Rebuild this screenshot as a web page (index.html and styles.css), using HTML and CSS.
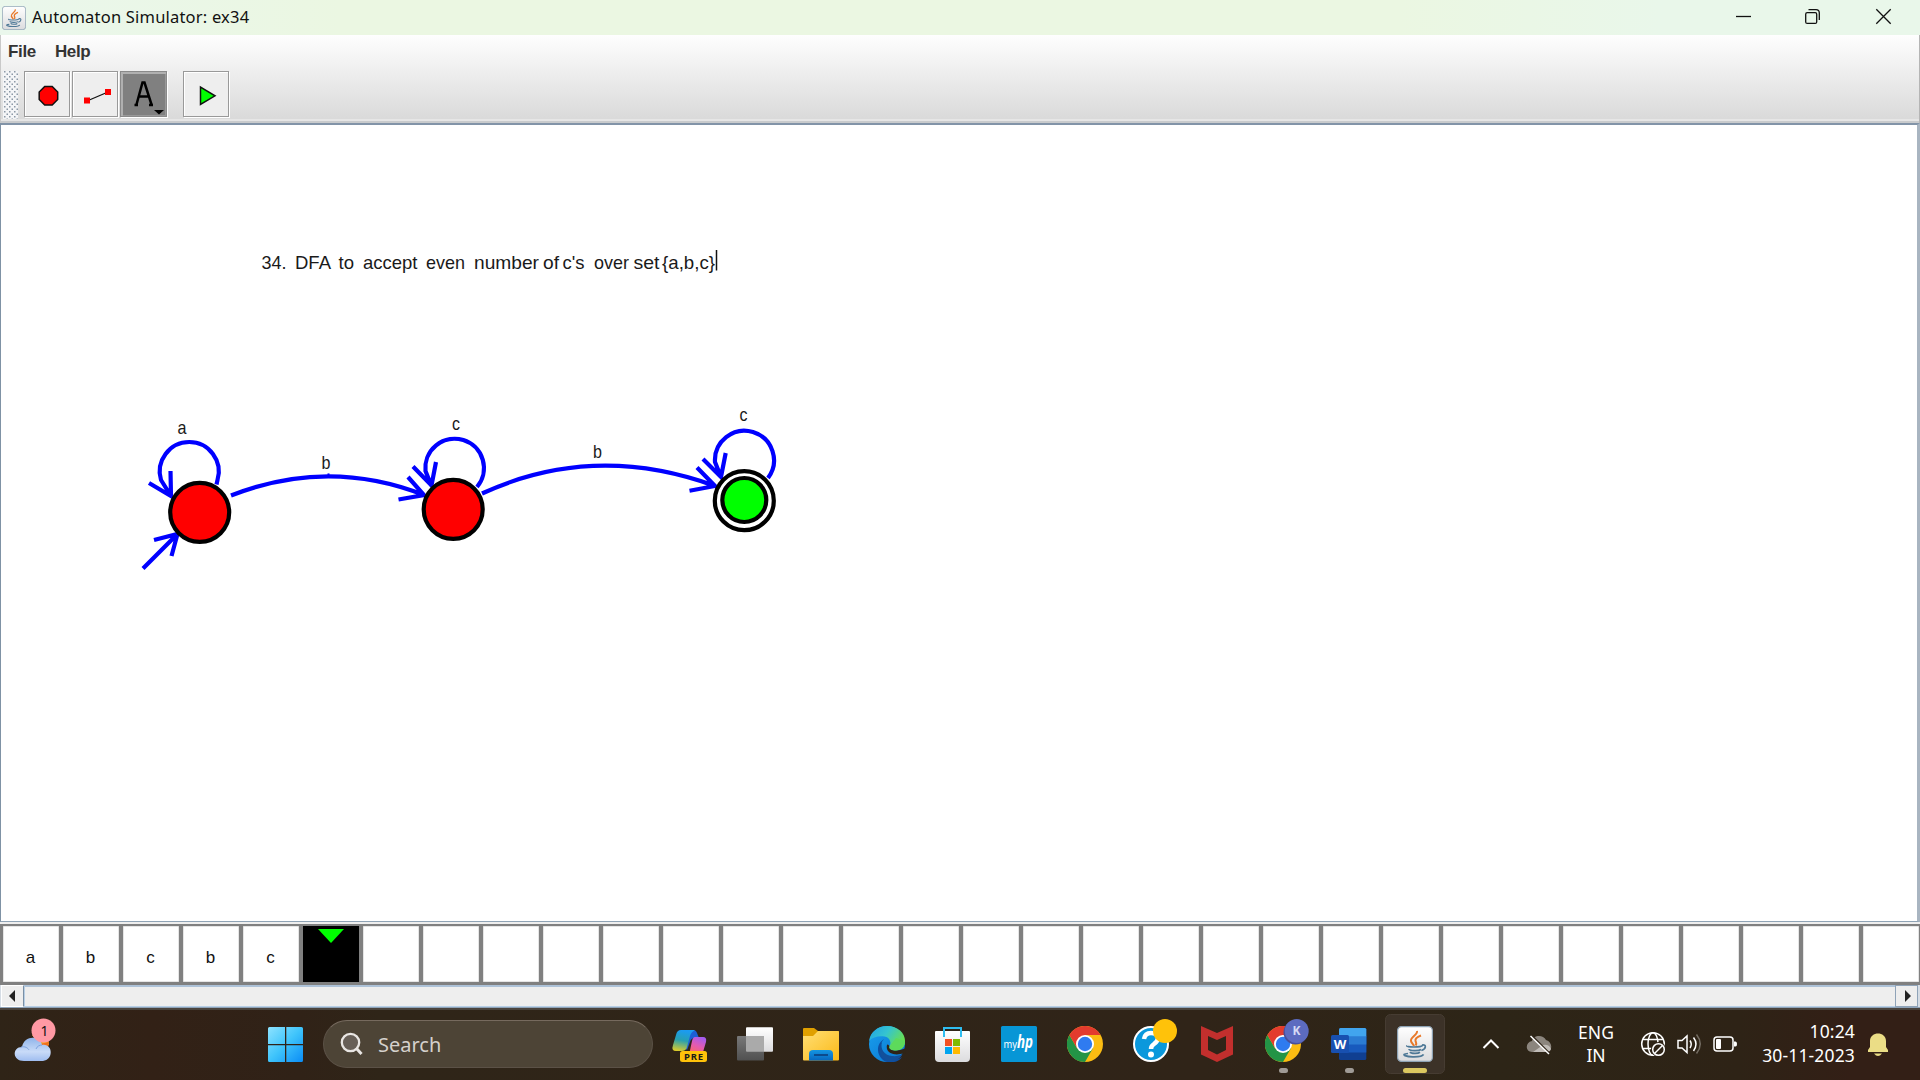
FILE: index.html
```html
<!DOCTYPE html>
<html lang="en">
<head>
<meta charset="utf-8">
<title>Automaton Simulator: ex34</title>
<link rel="stylesheet" href="styles.css">
</head>
<body>
<svg class="defs" width="0" height="0" aria-hidden="true">
  <defs>
    <linearGradient id="gWin" x1="0" y1="0" x2="1" y2="1"><stop offset="0" stop-color="#8ee3ff"/><stop offset=".5" stop-color="#3fc4fb"/><stop offset="1" stop-color="#0a8cf5"/></linearGradient>
    <linearGradient id="gCloud" x1="0" y1="0" x2="0" y2="1"><stop offset="0" stop-color="#8fb4ea"/><stop offset=".6" stop-color="#c9dbf8"/><stop offset="1" stop-color="#9fbdf0"/></linearGradient>
    <linearGradient id="gCo1" x1="0.3" y1="0" x2="0.1" y2="1"><stop offset="0" stop-color="#1b9bf0"/><stop offset=".45" stop-color="#27a0b0"/><stop offset="1" stop-color="#e8cf22"/></linearGradient>
    <linearGradient id="gCo2" x1="0.7" y1="0" x2="0.3" y2="1"><stop offset="0" stop-color="#a35cf0"/><stop offset=".5" stop-color="#e45bb0"/><stop offset="1" stop-color="#ff6a5a"/></linearGradient>
    <linearGradient id="gFold" x1="0" y1="0" x2="1" y2="1"><stop offset="0" stop-color="#ffdf75"/><stop offset="1" stop-color="#fbb917"/></linearGradient>
    <linearGradient id="gBlue" x1="0" y1="0" x2="0" y2="1"><stop offset="0" stop-color="#1496e2"/><stop offset="1" stop-color="#0767bf"/></linearGradient>
    <linearGradient id="gEdge" x1="0" y1="0" x2="1" y2=".5"><stop offset="0" stop-color="#1fa0e6"/><stop offset=".5" stop-color="#35c4d0"/><stop offset="1" stop-color="#6ae04c"/></linearGradient>
    <linearGradient id="gEdge2" x1="0" y1="0" x2="1" y2="1"><stop offset="0" stop-color="#1aa0ee"/><stop offset="1" stop-color="#0873cf"/></linearGradient>
    <linearGradient id="gPaper" x1="0" y1="0" x2="0" y2="1"><stop offset="0" stop-color="#ffffff"/><stop offset="1" stop-color="#dcdcde"/></linearGradient>
    <linearGradient id="gGray" x1="0" y1="0" x2="0" y2="1"><stop offset="0" stop-color="#787878"/><stop offset="1" stop-color="#505050"/></linearGradient>
    <symbol id="chrome" viewBox="0 0 36 36">
      <circle cx="18" cy="18" r="18" fill="#fbbc12"/>
      <path d="M18 18 10.2 22.5 2.4 9A18 18 0 0 0 18 36L25.8 22.5Z" fill="#239446"/>
      <path d="M18 9H33.6A18 18 0 0 0 2.4 9L10.2 22.5 18 18Z" fill="#e33b2e"/>
      <circle cx="18" cy="18" r="9" fill="#fff"/><circle cx="18" cy="18" r="7.2" fill="#2f7bf0"/>
    </symbol>
    <symbol id="java" viewBox="0 0 36 36">
      <rect x=".6" y=".6" width="34.8" height="34.8" rx="4" fill="url(#gPaper)" stroke="#8ea3b5" stroke-width="1.2"/>
      <path d="M20 5C21 9 13 11 14 15c.4 2 2.400 3 3 5M24 9.500c-4 1.500-6 3.500-5.500 5.500.4 1.500 1.500 2 .2 4.500" fill="none" stroke="#e8792a" stroke-width="2"/>
      <path d="M10 19.500c-2 2 14 2 15.500 0M12 23c0 2 10 2 12 .500M13 26c1 1.800 8 1.800 10 .3M25 19c5-1 4 4-.5 5.500M11 27.500c-9 1-1 3.500 6 3.300 6 0 9-1.300 9.500-2.500" fill="none" stroke="#4e7896" stroke-width="1.700"/>
    </symbol>
  </defs>
</svg>

<div class="window">
  <header class="titlebar">
    <svg class="app-icon" width="24" height="24"><use href="#java"/></svg>
    <h1 class="title">Automaton Simulator: ex34</h1>
    <svg class="controls" width="190" height="35" viewBox="1730 0 190 35" fill="none" stroke="#111" stroke-width="1.3">
      <path d="M1736 16.500h15"/>
      <rect x="1805.700" y="12.700" width="11" height="10.700" rx="1.500"/><path d="M1808.500 9.700h7.500a3.300 3.300 0 0 1 3.300 3.300v7"/>
      <path d="M1876.300 9.300l14.400 14.400M1890.700 9.300l-14.400 14.400"/>
    </svg>
  </header>

  <div class="chrome-bar">
    <nav class="menu"><span>File</span><span>Help</span></nav>
    <div class="toolbar">
      <svg class="grip" width="15" height="48"><defs><pattern id="dots" width="5" height="5" patternUnits="userSpaceOnUse"><rect width="5" height="5" fill="#f4f5f7"/><rect x="1" y="0" width="1.500" height="1.500" fill="#8b97a5"/><rect x="3.500" y="2.500" width="1.500" height="1.500" fill="#8b97a5"/></pattern></defs><rect width="15" height="48" fill="url(#dots)"/></svg>
      <button class="tool"><svg width="44" height="44" viewBox="25 72 44 44"><path d="M44.700 86.500h7.500l5.500 5.500v7.500l-5.500 5.500h-7.500l-5.500-5.500v-7.500z" fill="#f00" stroke="#111" stroke-width="1.500"/></svg></button>
      <button class="tool"><svg width="44" height="44" viewBox="73 72 44 44"><path d="M87 101l21-9" stroke="#111" stroke-width="1.300"/><path d="M84 97.500h6v6h-6zM105 89h6v6h-6z" fill="#f00"/></svg></button>
      <button class="tool tool--active"><svg width="44" height="44" viewBox="121 72 44 44"><path d="M134.500 105h3.500M149 105h4M136.500 104.500l6-22h2l7 22M139 96.500h9.500" fill="none" stroke="#000" stroke-width="2.500"/><path d="M154 110h10l-5 4.500z" fill="#000"/></svg></button>
      <button class="tool tool--run"><svg width="44" height="44" viewBox="184 72 44 44"><path d="M200.500 87v17.500l14.500-8.700z" fill="#0f0" stroke="#111" stroke-width="1.500"/></svg></button>
    </div>
  </div>

  <main class="canvas">
    <svg class="diagram" width="1916" height="796" viewBox="1 125 1916 796">
      <g class="edge">
        <path d="M216.500 484.500L217.500 480A29.500 29.500 0 1 0 161 480L171 496M149 483l22 13-.5-25"/>
        <path d="M231 495.500Q328 457.500 424 495M408 477l16 18-25.500 4.500"/>
        <path d="M477 487A29.300 29.300 0 1 0 425.500 471L431.500 486M413 466.500l18.500 19L436 462"/>
        <path d="M482 493.500Q594 442 715 486M697 467.500l18 18.500-25.500 4.700"/>
        <path d="M768 478A29.500 29.500 0 1 0 715 462L721 477M703 459l18 18 4.700-24"/>
        <path d="M143 568.500l34.500-34.500M154 540l23.500-6-6 22"/>
        <path d="M327.500 475.500h2" stroke-width="2"/>
      </g>
      <g class="state">
        <circle cx="199.700" cy="512.300" r="29.500" fill="#f00"/>
        <circle cx="453.200" cy="509.300" r="29.500" fill="#f00"/>
        <circle cx="744.300" cy="500.700" r="29.500" fill="#fff"/>
        <circle cx="744.300" cy="500" r="22" fill="#0f0"/>
      </g>
      <g class="label">
        <text x="177.500" y="434" textLength="9" lengthAdjust="spacingAndGlyphs">a</text>
        <text x="321.500" y="468.500" textLength="9" lengthAdjust="spacingAndGlyphs">b</text>
        <text x="452" y="429.500" textLength="8" lengthAdjust="spacingAndGlyphs">c</text>
        <text x="593" y="458.300" textLength="9" lengthAdjust="spacingAndGlyphs">b</text>
        <text x="739.500" y="420.800" textLength="8" lengthAdjust="spacingAndGlyphs">c</text>
      </g>
      <g class="label">
        <text x="261.500" y="269" textLength="25" lengthAdjust="spacingAndGlyphs">34.</text>
        <text x="295" y="269" textLength="36" lengthAdjust="spacingAndGlyphs">DFA</text>
        <text x="338.500" y="269" textLength="15.500" lengthAdjust="spacingAndGlyphs">to</text>
        <text x="363" y="269" textLength="54.500" lengthAdjust="spacingAndGlyphs">accept</text>
        <text x="426" y="269" textLength="39" lengthAdjust="spacingAndGlyphs">even</text>
        <text x="474" y="269" textLength="65" lengthAdjust="spacingAndGlyphs">number</text>
        <text x="543" y="269" textLength="16" lengthAdjust="spacingAndGlyphs">of</text>
        <text x="562.500" y="269" textLength="22" lengthAdjust="spacingAndGlyphs">c's</text>
        <text x="594" y="269" textLength="35" lengthAdjust="spacingAndGlyphs">over</text>
        <text x="633.500" y="269" textLength="26" lengthAdjust="spacingAndGlyphs">set</text>
        <text x="662" y="269" textLength="53" lengthAdjust="spacingAndGlyphs">{a,b,c}</text>
        <path d="M716.500 250v20.500" stroke="#111" stroke-width="1.500"/>
      </g>
    </svg>
  </main>

  <section class="tape">
    <div class="cell">a</div><div class="cell">b</div><div class="cell">c</div><div class="cell">b</div><div class="cell">c</div>
    <div class="cell cell--head"><svg width="26" height="14"><path d="M0 0h26l-13 14z" fill="#0f0"/></svg></div>
    <div class="cell"></div><div class="cell"></div><div class="cell"></div><div class="cell"></div><div class="cell"></div><div class="cell"></div><div class="cell"></div><div class="cell"></div><div class="cell"></div><div class="cell"></div><div class="cell"></div><div class="cell"></div><div class="cell"></div><div class="cell"></div><div class="cell"></div><div class="cell"></div><div class="cell"></div><div class="cell"></div><div class="cell"></div><div class="cell"></div><div class="cell"></div><div class="cell"></div><div class="cell"></div><div class="cell"></div><div class="cell"></div><div class="cell"></div>
  </section>

  <div class="scrollbar">
    <span class="arrow"><svg width="6" height="12"><path d="M6 0v12L0 6z" fill="#222"/></svg></span>
    <span class="track"></span>
    <span class="arrow arrow--right"><svg width="6" height="12"><path d="M0 0v12l6-6z" fill="#222"/></svg></span>
  </div>
</div>

<footer class="taskbar">
  <svg class="weather" width="60" height="70" viewBox="0 1010 60 70">
    <path d="M32 1035h16l1 10-6 3z" fill="#f5a623"/><path d="M40 1044l9-2-1 6z" fill="#f0701c"/>
    <path d="M24 1061c-12 0-12-14-2-14 2-12 18-12 20-2 11-2 12 15 1 16z" fill="url(#gCloud)"/>
    <path d="M21 1047c4-1 7 1 8 3M36 1049c1-3 4-4 6-4" fill="none" stroke="#7da3e0" stroke-width="1"/>
    <circle cx="43.500" cy="1030.500" r="12" fill="#ff99a4"/><text x="44.500" y="1036" text-anchor="middle" class="badge-num">1</text>
  </svg>
  <svg class="start" width="36" height="36" viewBox="0 0 36 36"><path d="M1.500 0H17v17H0V1.500Q0 0 1.500 0zM18.300 0H33.500Q35 0 35 1.500V17H18.300zM0 18.300h17V35H1.500Q0 35 0 33.500zM18.300 18.300H35V33.500Q35 35 33.500 35H18.300z" fill="url(#gWin)"/></svg>
  <div class="search">
    <svg width="24" height="24" viewBox="0 0 24 24" fill="none" stroke="#e9e6e3"><circle cx="10.500" cy="10.500" r="8.700" fill="#675f57" stroke-width="2.300"/><path d="M16.500 16.500l5 5.500" stroke-width="3"/></svg>
    <span>Search</span>
  </div>
  <nav class="apps">
    <svg viewBox="0 0 66 72">
      <path d="M34 22h3q3 0 4 3l2 5h-4q-4 0-5 4l-3 8-2-2z" fill="#1b5fd6"/>
      <path d="M25 22H39q-4 2-5 6l-3 11q-1 4-5 4h-6q-5 0-3-6l3-10q1-5 5-5z" fill="url(#gCo1)"/>
      <path d="M39 29h8q4 0 3 5l-3 10q-1 3-4 3H33l3-14q1-4 3-4z" fill="url(#gCo2)"/>
      <rect x="24" y="43" width="27" height="11" rx="2.500" fill="#ffc20a"/><text x="37.500" y="51.800" text-anchor="middle" class="pre" textLength="19">PRE</text>
    </svg>
    <svg viewBox="0 0 66 72"><rect x="24" y="19.300" width="27" height="24.500" rx="1" fill="url(#gPaper)"/><rect x="15" y="28" width="27" height="24.500" rx="1" fill="url(#gGray)"/><path d="M24 28h18v15.700H25q-1 0-1-1z" fill="#aaa"/></svg>
    <svg viewBox="0 0 66 72"><path d="M15 21q0-1 1-1h10l4 3-3 8H15z" fill="#e0a000"/><path d="M27 23h23q1 0 1 1v5H27z" fill="#e0a000"/><path d="M15 28h10l5-5h20q1 0 1 1v27.500q0 1-1 1H16q-1 0-1-1z" fill="url(#gFold)"/><path d="M21 52.500V46q0-4 4-4h16q4 0 4 4v6.500z" fill="url(#gBlue)"/><path d="M26 47h14" stroke="#0c4a8c" stroke-width="2"/></svg>
    <svg viewBox="0 0 66 72"><circle cx="33" cy="36" r="18" fill="url(#gEdge2)"/><path d="M15.200 33C16 24 24 18 33 18c11 0 18 7 18 15 0 6-4 9.500-9 9.500-4 0-7.500-1.500-6.500-4 2-3 1-9-5-10-6-.8-12 .5-15.300 4.500z" fill="url(#gEdge)"/><path d="M30 31c-4 4-5 11-1 16 5 6 13 6 19 2-4 6-10 5-15 5-8-2-14-16-3-23z" fill="#0d4fa3"/><path d="M35.500 38.500c-1 2.500 2.500 4 6.500 4 3 0 6-1 8.700-2L52 46l-2.500-1c-7 3-15 1-16.500-4-1-5 1-6 2.500-2.500z" fill="#2f2417"/><path d="M35.500 38.500c-1 2.500 2.500 4 6.500 4 5 0 9-3.500 9-9.500l-9-3z" fill="#5dda5b"/><path d="M28 34c-2 7 2 13 10 14 4 .5 8-.5 10.500-1.500-3 5-8 7-13 6.500-9-1-13-12-7.500-19z" fill="#12509b"/></svg>
    <svg viewBox="0 0 66 72"><path d="M15 24q0-1 1-1h33q1 0 1 1v26q0 4-4 4H19q-4 0-4-4z" fill="url(#gPaper)"/><path d="M24 29v-9h17v9" fill="none" stroke="#2fbdf0" stroke-width="2"/><path d="M25 31h7v7h-7z" fill="#f25022"/><path d="M33 31h7v7h-7z" fill="#7fba00"/><path d="M25 39h7v7h-7z" fill="#00a4ef"/><path d="M33 39h7v7h-7z" fill="#ffb900"/></svg>
    <svg viewBox="0 0 66 72"><rect x="15" y="18" width="36" height="36" rx="1.500" fill="#0796d6"/><text x="17.500" y="40" class="my" textLength="13.500" lengthAdjust="spacingAndGlyphs">my</text><text x="31" y="40" class="hp" textLength="16" lengthAdjust="spacingAndGlyphs">hp</text></svg>
    <svg viewBox="0 0 66 72"><use href="#chrome" x="15" y="18" width="36" height="36"/></svg>
    <svg viewBox="0 0 66 72"><circle cx="33" cy="36" r="17" fill="#0a98dc" stroke="#fff" stroke-width="2"/><path d="M26 31q1-6 7-6 7 0 7 5 0 3-4 6-3 2-3 5" fill="none" stroke="#fff" stroke-width="4.500"/><circle cx="33" cy="46.500" r="3" fill="#fff"/><circle cx="47" cy="23" r="12" fill="#ffc20a"/></svg>
    <svg viewBox="0 0 66 72"><path d="M17 18l16 7 16-7v28.500L33 54l-16-7.500zM24 28v14l9 4.500 9-4.500V28l-9 4z" fill="#c22f2d" fill-rule="evenodd"/></svg>
    <svg viewBox="0 0 66 72"><use href="#chrome" x="15" y="18" width="36" height="36"/><circle cx="45.500" cy="24.500" r="12" fill="#474f9b"/><circle cx="46.700" cy="23" r="12" fill="#5c6bc0"/><text x="46.500" y="27.300" text-anchor="middle" class="k">K</text><rect x="29" y="60" width="9" height="5" rx="2.500" fill="#a09b96"/></svg>
    <svg viewBox="0 0 66 72"><rect x="23" y="20" width="27.300" height="32" rx="1.500" fill="#103f91"/><path d="M23 44.500h27.300V28H23z" fill="#185abd"/><path d="M23 36.500h27.300V28H23z" fill="#2b7cd3"/><path d="M23 28.300V21.500q0-1.500 1.500-1.500h24.300q1.500 0 1.500 1.500v6.800z" fill="#41a5ee"/><rect x="15" y="27" width="18" height="18" rx="1.500" fill="#1850b0"/><text x="24" y="40.500" text-anchor="middle" class="w">W</text><rect x="29" y="60" width="9" height="5" rx="2.500" fill="#a09b96"/></svg>
    <svg viewBox="0 0 66 72"><rect x="3.500" y="6.500" width="59" height="59" rx="5" fill="#3c3228" stroke="#463c32"/><use href="#java" x="15" y="18" width="36" height="36"/><rect x="21" y="60" width="24" height="5" rx="2.500" fill="#dcc860"/></svg>
  </nav>
  <div class="tray">
    <svg width="90" height="72" viewBox="1475 1008 90 72">
      <path d="M1483.500 1048l7.500-7.500 7.500 7.500" fill="none" stroke="#fff" stroke-width="2"/>
      <path d="M1532 1052c-7 0-7-10 0-11 1-6 11-7 14-1 7 2 7 12 0 12z" fill="#8b857d"/><path d="M1533 1052l10-7q6-1 8 4-1 3-4 3z" fill="#c0bcb7"/>
      <path d="M1532 1036l18 18" stroke="#2f2417" stroke-width="2"/><path d="M1530.500 1036l18.500 18" stroke="#fff" stroke-width="1.500"/>
    </svg>
    <div class="lang"><span>ENG</span><span>IN</span></div>
    <svg class="status" width="110" height="72" viewBox="1633 1008 110 72" fill="none" stroke="#fff" stroke-width="1.500">
      <circle cx="1653" cy="1044" r="11.300"/><ellipse cx="1653" cy="1044" rx="5" ry="11.300"/><path d="M1643 1039.500h20M1643 1048.500h20"/>
      <circle cx="1658.500" cy="1049.500" r="7.500" fill="#2f2417" stroke="none"/><circle cx="1658.500" cy="1049.500" r="5.800"/><path d="M1654.500 1053.500l8-8"/>
      <path d="M1678 1040.500h4l5-4.500v16.500l-5-4.500h-4z"/><path d="M1690 1040.500q2.500 3.700 0 7.500M1693.500 1037.500q5 6.500 0 13.500"/><path d="M1696.500 1034.500q7.500 9.500 0 19" stroke="#746d63"/>
      <rect x="1714" y="1037" width="19" height="14" rx="3"/><path d="M1734 1041.500h1.500q1.500 0 1.500 2.500t-1.500 2.500h-1.500z" fill="#fff" stroke="none"/><rect x="1716" y="1039" width="5" height="10" rx="1" fill="#fff" stroke="none"/>
    </svg>
    <div class="clock"><span>10:24</span><span>30-11-2023</span></div>
    <svg width="24" height="26" viewBox="1866 1031 24 26"><path d="M1868 1052v-2l2-3v-6c0-10 16-10 16 0v6l2 3v2z" fill="#ebdd86"/><path d="M1874 1053.500h8q-4 5-8 0z" fill="#ebdd86"/></svg>
  </div>
</footer>
</body>
</html>
```
FILE: styles.css
```css
* { box-sizing: border-box; }
body {
  margin: 0;
  width: 1920px;
  height: 1080px;
  overflow: hidden;
  display: flex;
  flex-direction: column;
  background: #fff;
  font-family: "Noto Sans", "Open Sans", sans-serif;
}
svg { display: block; flex: none; }
.defs { height: 0; }
.window { height: 1008px; display: flex; flex-direction: column; }

.titlebar {
  height: 35px;
  display: flex;
  align-items: center;
  padding-left: 2px;
  background: linear-gradient(90deg, #eaf7ec 0, #ebf7e2 340px, #ebf7e2 1400px, #e9f7ea 1660px);
}
.title { margin: 0 auto 0 6px; font-size: 16.500px; font-weight: 400; line-height: 33px; height: 35px; color: #111; letter-spacing: .2px; }

.chrome-bar {
  height: 88px;
  padding-top: 1px;
  background: linear-gradient(#fefefe, #dadada 95%, #e6e6e6 95%, #e6e6e6 98%, #c9cbcd 98%);
  border-right: 1px solid #b5b5b5;
  border-left: 1px solid #c9c9c9;
}
.menu { display: flex; gap: 19px; padding-left: 7px; height: 35px; font: bold 17px/31px "Liberation Sans", Arial, sans-serif; letter-spacing: -.35px; color: #333; }
.toolbar { display: flex; align-items: flex-start; padding-left: 2px; }
.grip { margin-right: 6px; }
.tool { width: 46px; height: 46px; margin: 0 2px 0 0; padding: 0; border: 1px solid #999; background: #eee; box-shadow: 1px 1px 0 #fff, inset 1px 1px 0 #fff; }
.tool--active { width: 47px; background: #808080; border-color: #8a8a8a; box-shadow: 1px 1px 0 #fff, inset 2px 2px 0 #b0b0b0, inset -1px -1px 0 #999; }
.tool--run { margin-left: 14px; }

.canvas { height: 799px; border-style: solid; border-width: 2px 3px 1px 1px; border-color: #8294a8 #a9b5c1 #8fa3b5 #7f92a5; background: #fff; }
.diagram { overflow: hidden; }
.edge path { fill: none; stroke: #00f; stroke-width: 4.200px; }
.state circle { stroke: #000; stroke-width: 4.200px; }
.label { font: 19px "Liberation Sans", Arial, sans-serif; fill: #1a1a1a; }

.tape {
  height: 63px;
  display: flex;
  gap: 4px;
  padding: 2px 0 3px 3px;
  overflow: hidden;
  background: #808080;
  border-top: 2px solid #eee;
}
.cell { flex: none; width: 56px; height: 56px; padding-right: 1px; background: #fff; text-align: center; font: 17px/63px "Liberation Sans", Arial, sans-serif; color: #111; box-shadow: inset 0 0 0 .5px #ccc; }
.cell--head { display: flex; justify-content: center; padding-top: 3px; background: #000; box-shadow: none; }

.scrollbar { height: 23px; display: flex; padding: 0 2px 0 1px; background: #d5dce4; border-bottom: 1px solid #8fa3b8; }
.arrow { width: 23px; display: flex; align-items: center; justify-content: center; padding-right: 2px; background: #eee; border: 1px solid #fff; border-right-color: #7a8fa5; }
.arrow--right { padding: 0 0 0 2px; border: 1px solid #8fa3b8; }
.track { flex: 1; background: #eee; border-top: 2px solid #adc2d8; border-left: 1px solid #b8cfe5; border-bottom: 1px solid #b8cfe5; }

.taskbar { height: 72px; display: flex; align-items: center; border-top: 2px solid #4b443d; background: linear-gradient(90deg, #2f2417 0, #322116 150px, #302217 300px, #2f2518 380px, #302418 1200px, #2d2517 1500px, #2e2316 1740px, #331f16 1850px); }
.badge-num { font: 14px "Noto Sans", sans-serif; fill: #111; }
.start { margin: 0 19px 0 208px; }
.search { width: 330px; height: 48px; display: flex; align-items: center; gap: 14px; margin-top: -2px; padding-left: 16px; border: 1px solid #5b5146; border-top-color: #766a5e; border-radius: 24px; background: #4d4436; color: #d5d1cc; font-size: 20px; }
.apps { display: flex; margin: -2px 0 0 3px; }
.apps svg { width: 66px; height: 72px; }
.pre { font: 700 9.500px "Noto Sans", sans-serif; fill: #1b1b1b; }
.my { font: 11px "Noto Sans", sans-serif; fill: #fff; }
.hp { font: italic 700 17px "Open Sans", sans-serif; fill: #fff; }
.k { font: 700 12px "Noto Sans", sans-serif; fill: #d5daf5; }
.w { font: 700 13px "Noto Sans", sans-serif; fill: #fff; }
.tray { flex: 1; display: flex; align-items: center; margin-top: -2px; padding-left: 27px; color: #fff; font-size: 17.500px; line-height: 23px; }
.lang, .clock { display: flex; flex-direction: column; }
.lang { width: 62px; align-items: center; }
.status { margin-left: 6px; }
.clock { width: 112px; align-items: flex-end; margin: -2px 11px 0 0; line-height: 24px; letter-spacing: .15px; }
```
